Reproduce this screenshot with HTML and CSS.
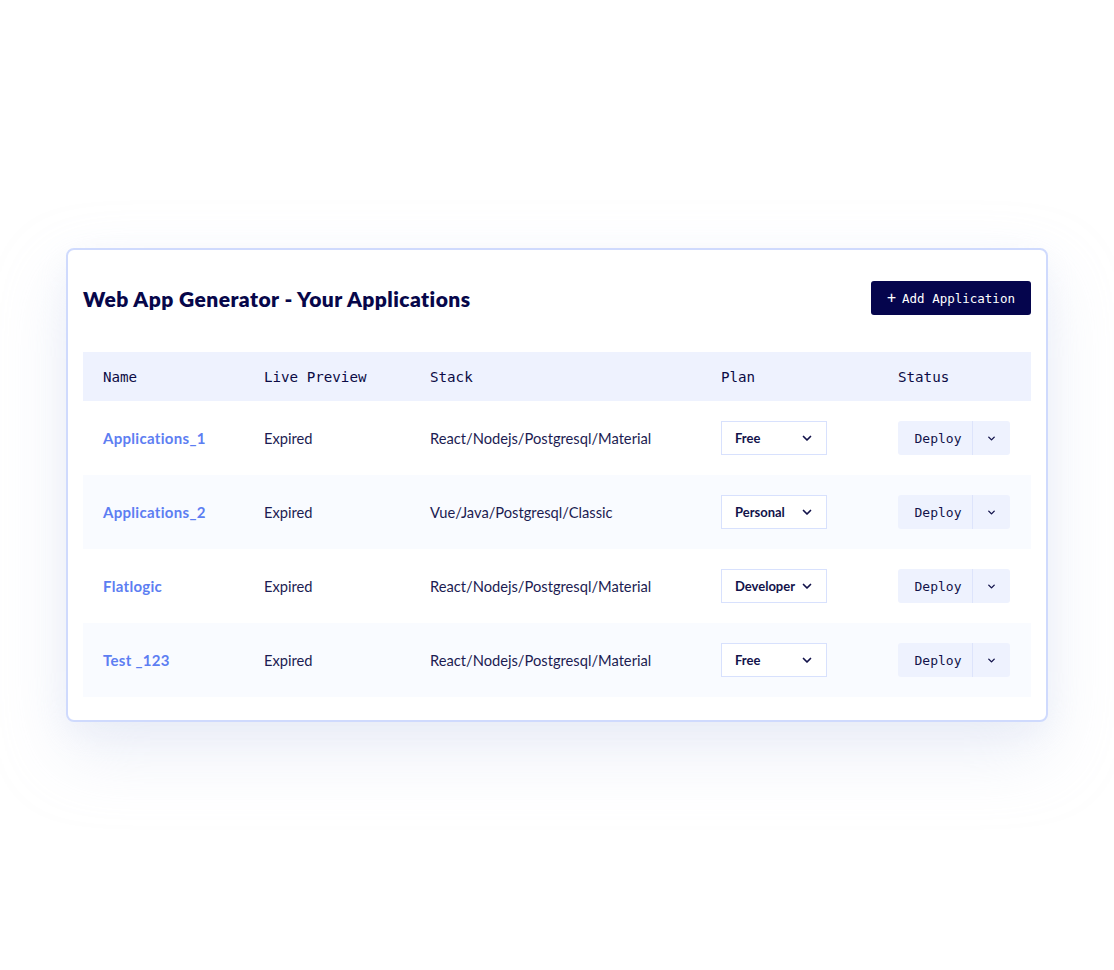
FILE: index.html
```html
<!DOCTYPE html>
<html>
<head>
<meta charset="utf-8">
<link rel="stylesheet" href="styles.css">
</head>
<body>
<div class="page">
  <div class="card">
    <div class="card-head">
      <h1 class="title">Web App Generator - Your Applications</h1>
      <button class="add-btn"><span class="plus">+</span> Add Application</button>
    </div>
    <div class="table">
      <div class="row head">
        <div class="c name">Name</div>
        <div class="c live">Live Preview</div>
        <div class="c stack">Stack</div>
        <div class="c plan">Plan</div>
        <div class="c status">Status</div>
      </div>
      <div class="row">
        <div class="c name"><a class="app">Applications_1</a></div>
        <div class="c live">Expired</div>
        <div class="c stack">React/Nodejs/Postgresql/Material</div>
        <div class="c plan"><div class="select"><span>Free</span><svg class="chev" viewBox="0 0 12 12"><path d="M2.5 4.5 6 8l3.5-3.5"/></svg></div></div>
        <div class="c status"><div class="deploy"><span class="dl">Deploy</span><span class="dr"><svg class="chev sm" viewBox="0 0 12 12"><path d="M3 4.5 6 7.5l3-3"/></svg></span></div></div>
      </div>
      <div class="row alt">
        <div class="c name"><a class="app">Applications_2</a></div>
        <div class="c live">Expired</div>
        <div class="c stack">Vue/Java/Postgresql/Classic</div>
        <div class="c plan"><div class="select"><span>Personal</span><svg class="chev" viewBox="0 0 12 12"><path d="M2.5 4.5 6 8l3.5-3.5"/></svg></div></div>
        <div class="c status"><div class="deploy"><span class="dl">Deploy</span><span class="dr"><svg class="chev sm" viewBox="0 0 12 12"><path d="M3 4.5 6 7.5l3-3"/></svg></span></div></div>
      </div>
      <div class="row">
        <div class="c name"><a class="app">Flatlogic</a></div>
        <div class="c live">Expired</div>
        <div class="c stack">React/Nodejs/Postgresql/Material</div>
        <div class="c plan"><div class="select"><span>Developer</span><svg class="chev" viewBox="0 0 12 12"><path d="M2.5 4.5 6 8l3.5-3.5"/></svg></div></div>
        <div class="c status"><div class="deploy"><span class="dl">Deploy</span><span class="dr"><svg class="chev sm" viewBox="0 0 12 12"><path d="M3 4.5 6 7.5l3-3"/></svg></span></div></div>
      </div>
      <div class="row alt">
        <div class="c name"><a class="app">Test _123</a></div>
        <div class="c live">Expired</div>
        <div class="c stack">React/Nodejs/Postgresql/Material</div>
        <div class="c plan"><div class="select"><span>Free</span><svg class="chev" viewBox="0 0 12 12"><path d="M2.5 4.5 6 8l3.5-3.5"/></svg></div></div>
        <div class="c status"><div class="deploy"><span class="dl">Deploy</span><span class="dr"><svg class="chev sm" viewBox="0 0 12 12"><path d="M3 4.5 6 7.5l3-3"/></svg></span></div></div>
      </div>
    </div>
  </div>
</div>
</body>
</html>
```
FILE: styles.css
```css
* { box-sizing: border-box; }
html, body { margin: 0; padding: 0; background: #ffffff; }
body {
  font-family: "Lato", "Noto Sans", sans-serif;
  color: #1c1c52;
  width: 1114px;
  height: 970px;
  overflow: hidden;
}
.page {
  padding-top: 248px;
  padding-left: 66px;
}
.card {
  width: 982px;
  height: 474px;
  border: 2px solid #cfdafd;
  border-radius: 8px;
  background: #fff;
  padding: 31px 15px 23px 15px;
  box-shadow: 0 30px 70px rgba(200, 210, 235, 0.35), 0 10px 30px rgba(210, 218, 240, 0.2);
}
.card-head {
  display: flex;
  justify-content: space-between;
  align-items: center;
  height: 34px;
  margin-bottom: 37px;
}
.title {
  margin: 0;
  font-size: 21px;
  font-weight: 800;
  color: #07074a;
  letter-spacing: 0.45px;
}
.add-btn {
  height: 34px;
  width: 160px;
  border: none;
  border-radius: 3px;
  background: #05054d;
  color: #fff;
  font-family: "DejaVu Sans Mono", monospace;
  font-size: 12.5px;
  padding: 0;
  display: flex;
  align-items: center;
  justify-content: center;
  gap: 6px;
}
.plus { font-size: 15px; }
.table { width: 948px; }
.row {
  display: flex;
  align-items: center;
  height: 74px;
  font-size: 14.7px;
}
.row.head {
  height: 49px;
  background: #eef2fe;
  font-family: "DejaVu Sans Mono", monospace;
  font-size: 14.2px;
  color: #0b0b45;
}
.row.alt { background: #f9fbff; }
.c { flex: none; }
.name { width: 181px; padding-left: 20px; }
.live { width: 166px; }
.stack { width: 291px; }
.plan { width: 177px; }
.status { flex: 1; }
.app {
  color: #5d7ef2;
  font-weight: 700;
  font-size: 15px;
  letter-spacing: 0.3px;
  text-decoration: none;
}
.select {
  width: 106px;
  height: 34px;
  border: 1px solid #d8e1fd;
  background: #fff;
  display: flex;
  align-items: center;
  justify-content: space-between;
  padding: 0 13px 0 13px;
  font-size: 13px;
  font-weight: 700;
  color: #12124a;
}
.chev {
  width: 12px;
  height: 12px;
  fill: none;
  stroke: #12124a;
  stroke-width: 1.7;
  stroke-linecap: round;
  stroke-linejoin: round;
}
.chev.sm { width: 11px; height: 11px; stroke-width: 1.5; }
.deploy {
  width: 112px;
  height: 34px;
  display: flex;
  background: #eef2fe;
  border-radius: 3px;
}
.dl {
  width: 75px;
  display: flex;
  align-items: center;
  justify-content: center;
  font-family: "DejaVu Sans Mono", monospace;
  font-size: 13px;
  color: #12124a;
  border-right: 1px solid #dde4fb;
  padding-left: 6px;
}
.dr {
  flex: 1;
  display: flex;
  align-items: center;
  justify-content: center;
}
```
